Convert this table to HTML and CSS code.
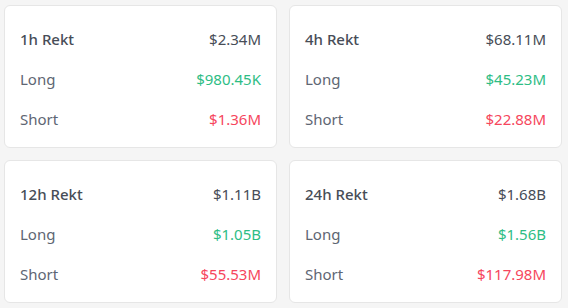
FILE: index.html
```html
<!DOCTYPE html>
<html>
<head>
<meta charset="utf-8">
<link rel="stylesheet" href="styles.css">
</head>
<body>
<div class="grid">
  <div class="card">
    <div class="row"><span class="title">1h Rekt</span><span class="total">$2.34M</span></div>
    <div class="row"><span class="label">Long</span><span class="up">$980.45K</span></div>
    <div class="row"><span class="label">Short</span><span class="down">$1.36M</span></div>
  </div>
  <div class="card">
    <div class="row"><span class="title">4h Rekt</span><span class="total">$68.11M</span></div>
    <div class="row"><span class="label">Long</span><span class="up">$45.23M</span></div>
    <div class="row"><span class="label">Short</span><span class="down">$22.88M</span></div>
  </div>
  <div class="card">
    <div class="row"><span class="title">12h Rekt</span><span class="total">$1.11B</span></div>
    <div class="row"><span class="label">Long</span><span class="up">$1.05B</span></div>
    <div class="row"><span class="label">Short</span><span class="down">$55.53M</span></div>
  </div>
  <div class="card">
    <div class="row"><span class="title">24h Rekt</span><span class="total">$1.68B</span></div>
    <div class="row"><span class="label">Long</span><span class="up">$1.56B</span></div>
    <div class="row"><span class="label">Short</span><span class="down">$117.98M</span></div>
  </div>
</div>
</body>
</html>
```
FILE: styles.css
```css
html, body {
  margin: 0;
  background: #f5f5f5;
}
body {
  padding: 5px 6px 5px 4px;
  font-family: "Noto Sans", "Open Sans", sans-serif;
  font-size: 15px;
}
.grid {
  display: grid;
  grid-template-columns: 273px 273px;
  gap: 12px 12px;
}
.card {
  background: #fff;
  border: 1px solid #e6e6e6;
  border-radius: 6px;
  padding: 13px 15px 8px;
  height: 143px;
  box-sizing: border-box;
}
.row {
  display: flex;
  justify-content: space-between;
  align-items: center;
  height: 40px;
}
.title {
  color: #474d57;
  font-weight: 500;
}
.total {
  color: #474d57;
}
.label {
  color: #5e6673;
}
.up {
  color: #2ebd85;
}
.down {
  color: #f6465d;
}
```
